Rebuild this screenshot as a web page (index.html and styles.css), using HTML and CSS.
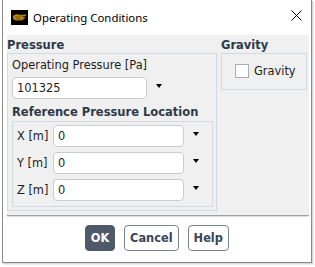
FILE: index.html
```html
<!DOCTYPE html>
<html>
<head>
<meta charset="utf-8">
<link rel="stylesheet" href="styles.css">
</head>
<body>
<div class="window">
  <div class="titlebar">
    <svg class="app-icon" width="17" height="15" viewBox="0 0 17 15">
      <rect width="17" height="15" fill="#000"/>
      <path d="M2 6 C4 4 7 4 9 5 L14 4.5 C15.5 4.5 15.5 6 14 6.2 L10 6.5 L13 7 C14.5 7.3 14.3 8.6 13 8.6 L12 8.8 C13 9.3 12.5 10.5 11.3 10.3 L6 10.5 C4 10.6 2.5 9.5 2 8 Z" fill="#b8860b"/>
      <path d="M4 7 L9 7 M5 9 L10 9" stroke="#6b4a05" stroke-width="0.8"/>
    </svg>
    <span class="title">Operating Conditions</span>
    <svg class="close" width="11" height="11" viewBox="0 0 11 11">
      <path d="M0.5 0.5 L10.5 10.5 M10.5 0.5 L0.5 10.5" stroke="#000" stroke-width="1"/>
    </svg>
  </div>
  <div class="content">
    <div class="group pressure">
      <div class="group-title">Pressure</div>
      <div class="group-box pressure-box">
        <div class="field-label">Operating Pressure [Pa]</div>
        <div class="field-row">
          <div class="input wide">101325</div>
          <span class="arrow"></span>
        </div>
        <div class="sub-title">Reference Pressure Location</div>
        <div class="sub-box">
          <div class="coord-row">
            <span class="coord-label">X [m]</span>
            <div class="input coord">0</div>
            <span class="arrow"></span>
          </div>
          <div class="coord-row">
            <span class="coord-label">Y [m]</span>
            <div class="input coord">0</div>
            <span class="arrow"></span>
          </div>
          <div class="coord-row">
            <span class="coord-label">Z [m]</span>
            <div class="input coord">0</div>
            <span class="arrow"></span>
          </div>
        </div>
      </div>
    </div>
    <div class="group gravity">
      <div class="group-title">Gravity</div>
      <div class="group-box gravity-box">
        <span class="checkbox"></span>
        <span class="check-label">Gravity</span>
      </div>
    </div>
  </div>
  <div class="separator"></div>
  <div class="buttons">
    <button class="btn primary">OK</button>
    <button class="btn">Cancel</button>
    <button class="btn">Help</button>
  </div>
</div>
</body>
</html>
```

FILE: styles.css
```css
html, body {
  margin: 0;
  padding: 0;
  background: #ffffff;
}
body {
  width: 315px;
  height: 267px;
  overflow: hidden;
  font-family: "DejaVu Sans", sans-serif;
}
.window {
  margin-left: 2px;
  width: 308px;
  height: 262px;
  border: 1px solid #8a8a8a;
  border-top: none;
  background: #ffffff;
  box-shadow: 1px 1px 0 #d8d8d8, 2px 2px 0 #ececec;
  display: flex;
  flex-direction: column;
}
.titlebar {
  height: 35px;
  display: flex;
  align-items: center;
  padding-left: 8px;
  padding-right: 8px;
  box-sizing: border-box;
}
.app-icon {
  display: block;
  margin-top: -1px;
}
.title {
  margin-left: 5px;
  font-family: "Noto Sans", sans-serif;
  font-size: 11.4px;
  color: #000;
  flex: 1;
  margin-top: -1px;
}
.close {
  display: block;
  margin-right: 1px;
  margin-top: -4px;
}
.content {
  margin-left: 4px;
  margin-right: 2px;
  background: #f0f0f0;
  height: 180px;
  display: flex;
  gap: 4px;
  padding-top: 2px;
  box-sizing: border-box;
}
.group-title {
  font-weight: bold;
  font-size: 11.5px;
  color: #2e3a48;
  height: 16px;
  line-height: 16px;
}
.group-box {
  border: 1px solid #d3d9e1;
  box-sizing: border-box;
}
.pressure {
  width: 210px;
}
.pressure-box {
  height: 158px;
  padding: 3px 4px 0 4px;
}
.field-label {
  font-size: 11.4px;
  color: #1e1e1e;
  line-height: 16px;
}
.field-row {
  display: flex;
  align-items: center;
  margin-top: 4px;
}
.input {
  background: #ffffff;
  border: 1px solid #c9ccd0;
  border-radius: 4px;
  box-sizing: border-box;
  font-size: 11.4px;
  color: #1e1e1e;
  padding-left: 4px;
  display: flex;
  align-items: center;
}
.input.wide {
  width: 135px;
  height: 22px;
}
.arrow {
  display: block;
  width: 0;
  height: 0;
  border-left: 3.5px solid transparent;
  border-right: 3.5px solid transparent;
  border-top: 4px solid #000;
  margin-top: -4px;
}
.field-row .arrow {
  margin-left: 9px;
}
.sub-title {
  margin-top: 5px;
  font-weight: bold;
  font-size: 11.5px;
  color: #2e3a48;
  line-height: 16px;
}
.sub-box {
  margin-top: 1px;
  border: 1px solid #d3d9e1;
  width: 201px;
  height: 86px;
  box-sizing: border-box;
  padding: 3px 0 0 4px;
  display: flex;
  flex-direction: column;
  gap: 5px;
}
.coord-row {
  display: flex;
  align-items: center;
  height: 22px;
}
.coord-label {
  width: 36px;
  font-size: 11.4px;
  color: #1e1e1e;
}
.input.coord {
  width: 131px;
  height: 22px;
}
.coord-row .arrow {
  margin-left: 9px;
}
.gravity {
  width: 86px;
}
.gravity-box {
  height: 37px;
  display: flex;
  align-items: center;
  padding-left: 13px;
  padding-bottom: 2px;
}
.checkbox {
  width: 14px;
  height: 14px;
  box-sizing: border-box;
  border: 1px solid #a9adb2;
  background: #ffffff;
  display: block;
}
.check-label {
  margin-left: 5px;
  font-size: 11.4px;
  color: #1e1e1e;
}
.separator {
  margin-left: 4px;
  margin-right: 2px;
  height: 2px;
  background: #a0a0a0;
  border-bottom: 1px solid #e0e0e0;
  box-sizing: border-box;
}
.buttons {
  flex: 1;
  display: flex;
  justify-content: center;
  align-items: flex-start;
  gap: 9px;
  padding-top: 8px;
}
.btn {
  height: 26px;
  font-family: "DejaVu Sans", sans-serif;
  font-weight: bold;
  font-size: 11.4px;
  color: #3a4556;
  background: #ffffff;
  border: 1px solid #7a8594;
  border-radius: 4px;
  padding: 0 5px;
  margin: 0;
  cursor: default;
}
.btn.primary {
  background: #4e5969;
  border-color: #4e5969;
  color: #ffffff;
  width: 30px;
  padding: 0;
}
```
